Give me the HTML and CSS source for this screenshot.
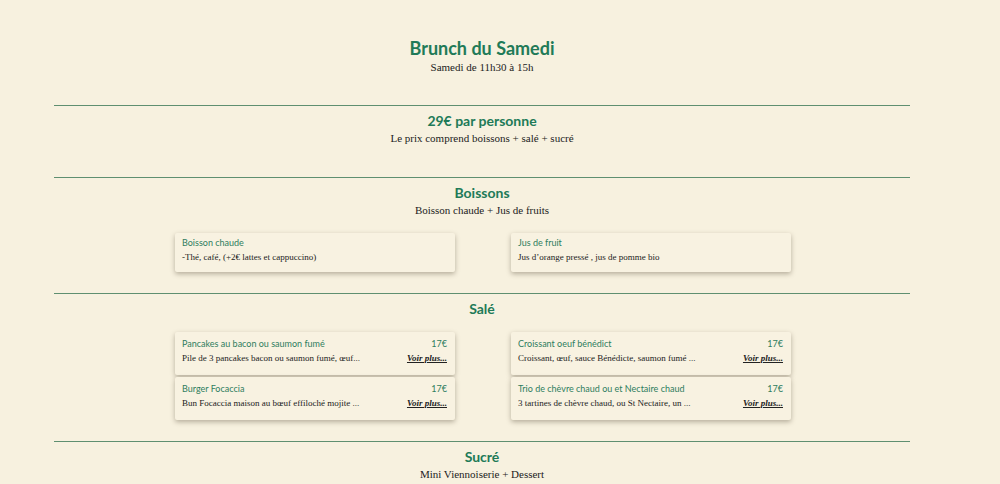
FILE: index.html
```html
<!DOCTYPE html>
<html lang="fr">
<head>
<meta charset="utf-8">
<title>Brunch du Samedi</title>
<link rel="stylesheet" href="styles.css">
</head>
<body>
<main class="menu">
  <header class="intro">
    <h1 class="intro-title">Brunch du Samedi</h1>
    <p class="lead">Samedi de 11h30 à 15h</p>
  </header>

  <section class="section section-price">
    <h2 class="section-title">29€ par personne</h2>
    <p class="lead">Le prix comprend boissons + salé + sucré</p>
  </section>

  <section class="section">
    <h2 class="section-title">Boissons</h2>
    <p class="lead">Boisson chaude + Jus de fruits</p>
    <div class="grid">
      <div class="col">
        <article class="card">
          <div class="card-head"><span class="card-name">Boisson chaude</span></div>
          <p class="card-desc">-Thé, café, (+2€ lattes et cappuccino)</p>
        </article>
      </div>
      <div class="col">
        <article class="card">
          <div class="card-head"><span class="card-name">Jus de fruit</span></div>
          <p class="card-desc">Jus d’orange pressé , jus de pomme bio</p>
        </article>
      </div>
    </div>
  </section>

  <section class="section">
    <h2 class="section-title">Salé</h2>
    <div class="grid grid-tight">
      <div class="col">
        <article class="card card-priced">
          <div class="card-head"><span class="card-name">Pancakes au bacon ou saumon fumé</span><span class="card-price">17€</span></div>
          <div class="card-row"><p class="card-desc">Pile de 3 pancakes bacon ou saumon fumé, œuf...</p><a class="more" href="#">Voir plus...</a></div>
        </article>
        <article class="card card-priced">
          <div class="card-head"><span class="card-name">Burger Focaccia</span><span class="card-price">17€</span></div>
          <div class="card-row"><p class="card-desc">Bun Focaccia maison au bœuf effiloché mojite ...</p><a class="more" href="#">Voir plus...</a></div>
        </article>
      </div>
      <div class="col">
        <article class="card card-priced">
          <div class="card-head"><span class="card-name">Croissant oeuf bénédict</span><span class="card-price">17€</span></div>
          <div class="card-row"><p class="card-desc">Croissant, œuf, sauce Bénédicte, saumon fumé ...</p><a class="more" href="#">Voir plus...</a></div>
        </article>
        <article class="card card-priced">
          <div class="card-head"><span class="card-name">Trio de chèvre chaud ou et Nectaire chaud</span><span class="card-price">17€</span></div>
          <div class="card-row"><p class="card-desc">3 tartines de chèvre chaud, ou St Nectaire, un ...</p><a class="more" href="#">Voir plus...</a></div>
        </article>
      </div>
    </div>
  </section>

  <section class="section">
    <h2 class="section-title">Sucré</h2>
    <p class="lead">Mini Viennoiserie + Dessert</p>
  </section>
</main>
</body>
</html>
```

FILE: styles.css
```css
html, body {
  margin: 0;
  padding: 0;
  background: #f7f1df;
}

body {
  font-family: "Liberation Serif", Georgia, serif;
  color: #222;
  height: 484px;
  overflow: hidden;
}

.menu {
  width: 856px;
  margin-left: 54px;
  text-align: center;
}

.intro {
  padding: 37px 0 30px;
}

.intro-title {
  margin: 0;
  font-family: Lato, "Open Sans", sans-serif;
  font-weight: 700;
  font-size: 18px;
  line-height: 22px;
  color: #217a57;
}

.lead {
  margin: 0;
  font-size: 11px;
  line-height: 16px;
  color: #222;
}

.section {
  border-top: 1px solid #5f8f70;
  padding: 6px 0 21px;
}

.section-price {
  padding-bottom: 31px;
}

.section-title {
  margin: 0;
  font-family: Lato, "Open Sans", sans-serif;
  font-weight: 700;
  font-size: 14px;
  line-height: 18px;
  color: #217a57;
}

.grid {
  display: grid;
  grid-template-columns: 280px 280px;
  column-gap: 56px;
  justify-content: center;
  margin-top: 15px;
  padding-left: 2px;
  text-align: left;
}

.grid-tight {
  margin-top: 14px;
}

.col {
  display: flex;
  flex-direction: column;
  gap: 2px;
}

.card {
  background: #f8f2e1;
  box-shadow: 0 2px 5px rgba(60, 50, 30, 0.35);
  border-radius: 2px;
  padding: 3px 8px 7px 7px;
}

.card-priced {
  padding-top: 5px;
  padding-bottom: 9px;
}

.card-head {
  display: flex;
  justify-content: space-between;
  font-family: Lato, "Open Sans", sans-serif;
  font-size: 9px;
  line-height: 13px;
  color: #2e7d5e;
}

.card-row {
  display: flex;
  justify-content: space-between;
  align-items: baseline;
}

.card-desc {
  margin: 0;
  font-size: 9px;
  line-height: 16px;
  color: #222;
}

.more {
  font-size: 9px;
  line-height: 16px;
  font-weight: 700;
  font-style: italic;
  color: #222;
  text-decoration: underline;
}
```
